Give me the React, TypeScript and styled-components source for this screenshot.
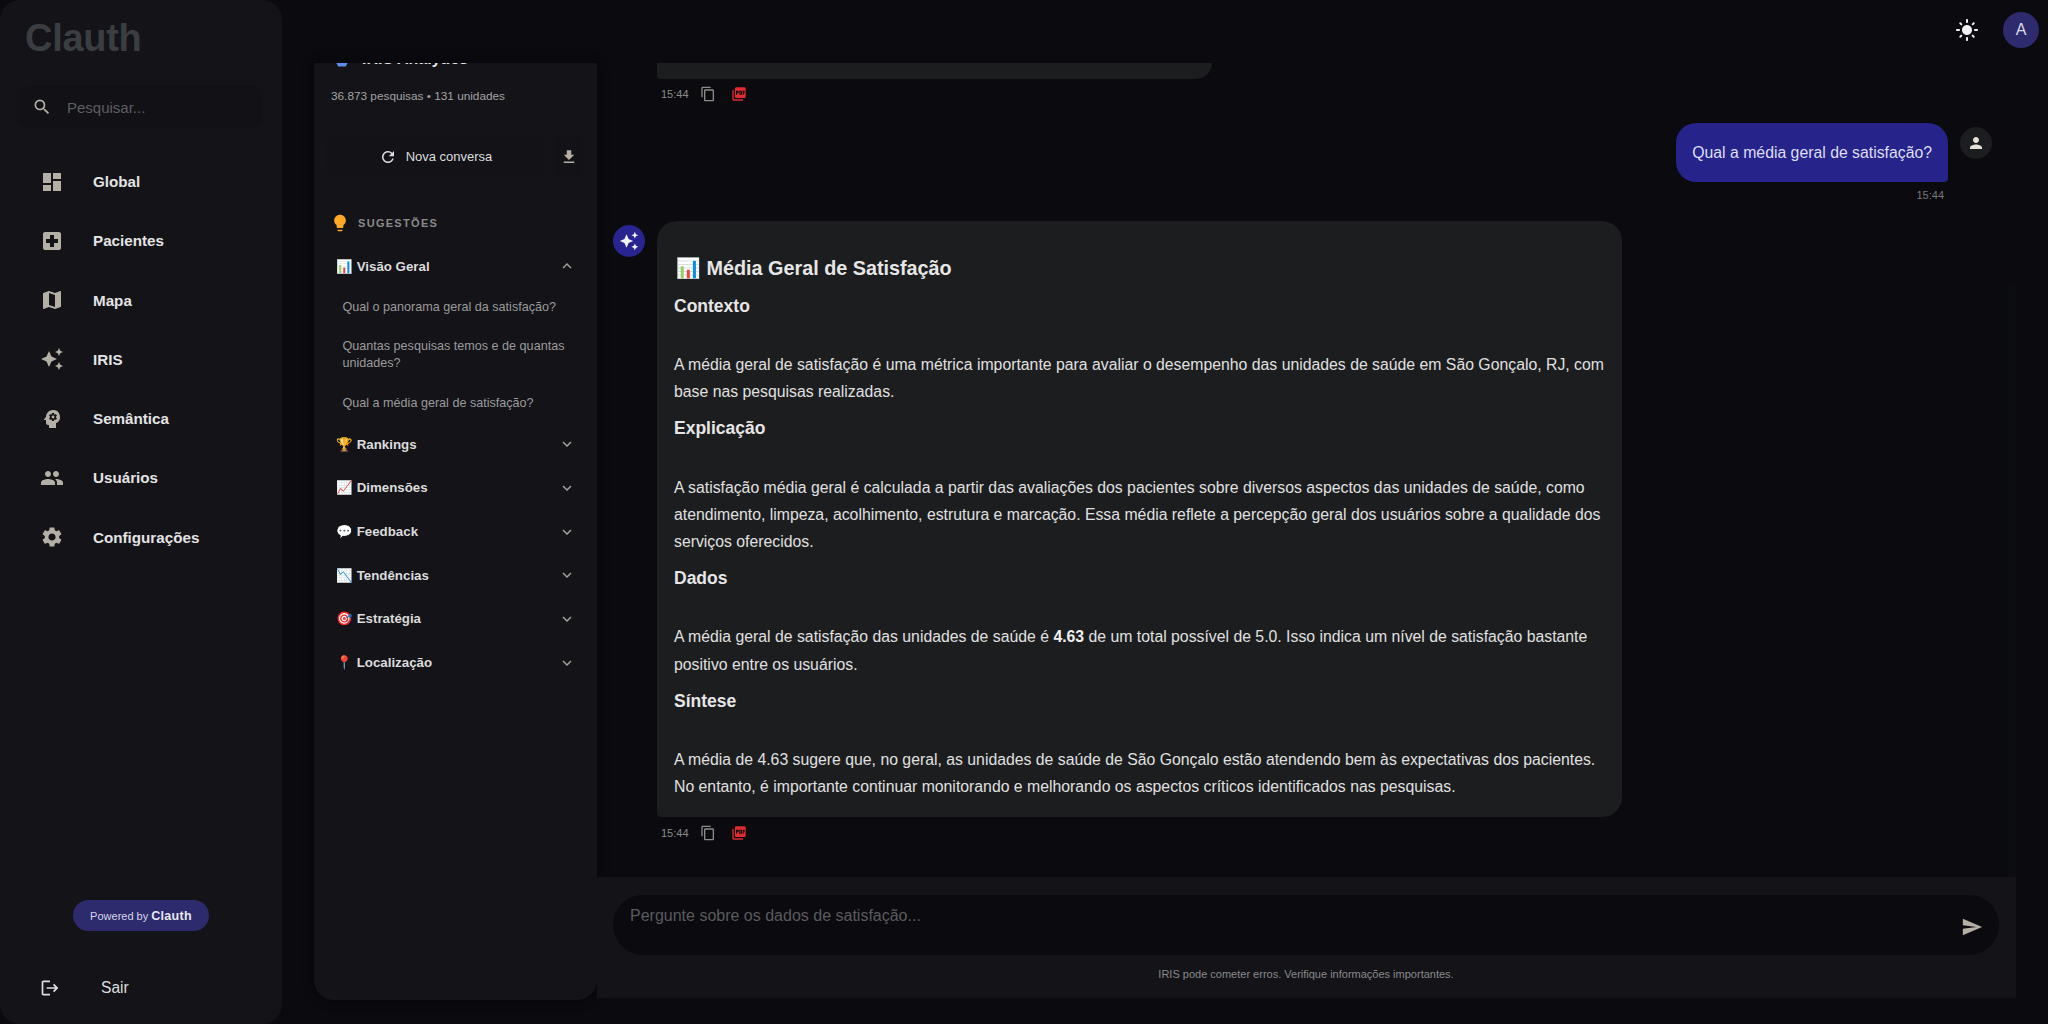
import React from "react";
import styled, { createGlobalStyle } from "styled-components";
import {
  MdDashboard, MdLocalHospital, MdMap, MdAutoAwesome, MdPsychology, MdPeople, MdSettings,
  MdLogout, MdSearch, MdRefresh, MdDownload, MdLightbulb, MdExpandMore, MdExpandLess,
  MdContentCopy, MdPictureAsPdf, MdPerson, MdSend, MdLightMode,
} from "react-icons/md";

const Global = createGlobalStyle`
  html, body { margin: 0; padding: 0; background: #0a0a0f; }
  body { font-family: "Liberation Sans", Arial, sans-serif; color: #e5e5e5; overflow: hidden; }
  * { box-sizing: border-box; }
`;

const Shell = styled.div`display: flex; width: 2048px; height: 1024px; background: #0a0a0f;`;

const Sidebar = styled.aside`
  width: 282px; height: 1024px; flex: none; background: #131318; border-radius: 20px;
  display: flex; flex-direction: column; padding: 0 20px;
`;
const Logo = styled.div`
  font-size: 38px; font-weight: 700; color: #3b3e41; height: 76px; line-height: 76px; padding-left: 5px;
  letter-spacing: -0.3px;
`;
const SearchBox = styled.div`
  height: 42px; margin-top: 10px; border-radius: 10px; background: #111116; display: flex; align-items: center;
  gap: 15px; padding-left: 12px; color: #b5b0a5; font-size: 15px;
`;
const SearchText = styled.span`color: #5e5e60;`;
const Nav = styled.nav`display: flex; flex-direction: column; margin-top: 24px;`;
const NavItem = styled.div`
  height: 59.25px; display: flex; align-items: center; font-size: 15.2px; font-weight: 700; color: #e4e4e4;
  padding-left: 20px; gap: 29px;
  svg { color: #b5b0a5; flex: none; }
`;
const SidebarFoot = styled.div`margin-top: auto; display: flex; flex-direction: column; align-items: center;`;
const Pill = styled.div`
  height: 31px; width: 136px; border-radius: 16px; background: #2d2a6e; display: flex; align-items: center;
  justify-content: center; gap: 3px; font-size: 11px; color: #d6d6e6;
`;
const PillBrand = styled.b`font-size: 12.5px; color: #e8e8f0; letter-spacing: 0.3px;`;
const Logout = styled.div`
  align-self: stretch; display: flex; align-items: center; height: 40px; margin: 37px 0 16px; padding-left: 20px;
  gap: 41px; font-size: 15.6px; color: #dedede; svg { color: #e0e0e0; flex: none; }
`;

const Main = styled.div`flex: 1; min-width: 0; display: flex; flex-direction: column; padding-bottom: 24px;`;
const TopBar = styled.header`
  height: 63px; flex: none; display: flex; justify-content: flex-end; align-items: center; padding: 0 9px 3px 0; gap: 24px;
  svg { color: #f0f0f0; }
`;
const UserCircle = styled.div`
  width: 36px; height: 36px; border-radius: 50%; background: #2d2a6e; color: #dcdce8; font-size: 16px;
  display: flex; align-items: center; justify-content: center;
`;
const Body = styled.div`flex: 1; min-height: 0; display: flex; padding: 0 32px;`;

const Panel = styled.section`
  width: 283px; flex: none; background: #131318; border-radius: 0 0 20px 20px; overflow: hidden;
  display: flex; flex-direction: column; box-shadow: 0 0 12px rgba(0,0,0,.4);
`;
const PanelInner = styled.div`margin-top: -15px; padding: 0 15px 0 12px; display: flex; flex-direction: column;`;
const PanelTitle = styled.div`
  display: flex; align-items: center; gap: 13px; height: 22px; padding-left: 9px; font-size: 16px; font-weight: 700; color: #e5e5e5;
`;
const Robot = styled.span`
  width: 14px; height: 15px; background: #5b8def; display: block; flex: none;
  clip-path: polygon(0 0, 100% 0, 100% 55%, 78% 100%, 22% 100%, 0 55%);
`;
const Stats = styled.div`font-size: 11.8px; color: #a3a3a3; padding-left: 5px; margin-top: 17px; line-height: 18px;`;
const ActionRow = styled.div`display: flex; gap: 10px; margin-top: 31px;`;
const NewChat = styled.div`
  width: 219px; height: 41px; border-radius: 10px; background: #121217; display: flex; align-items: center;
  justify-content: center; gap: 9px; font-size: 13px; color: #dedede; svg { color: #dedede; }
`;
const IconBtn = styled.div`
  width: 27px; height: 41px; border-radius: 8px; background: #121217; display: flex; align-items: center; justify-content: center;
  svg { color: #b5b0a5; }
`;
const Suggest = styled.div`
  display: flex; align-items: center; gap: 8px; margin-top: 33.6px; height: 24px; padding-left: 4px; font-size: 11px; font-weight: 700;
  letter-spacing: 1.3px; color: #8a8a88; svg { color: #ffa726; flex: none; }
`;
const Accordion = styled.div`
  height: 43.7px; display: flex; align-items: center; justify-content: space-between; padding: 0 6px 0 10px;
  font-size: 13.3px; font-weight: 700; color: #dcdcdc; svg { color: #a5a19a; flex: none; }
`;
const Sub = styled.div`font-size: 12.6px; line-height: 17px; color: #9b9b9b; padding: 0 0 0 16.5px; margin-bottom: 22.5px;`;
const SubList = styled.div`padding-top: 10.5px; margin-bottom: -12px;`;
const FirstAccordion = styled(Accordion)`margin-top: 10px;`;

const Chat = styled.main`flex: 1; min-width: 0; display: flex; flex-direction: column;`;
const Messages = styled.div`
  flex: 1; min-height: 0; overflow: hidden; display: flex; flex-direction: column; padding: 0 24px 0 16px;
  background: linear-gradient(to left, #0c0d10 8px, transparent 8px) no-repeat 0 222px;
`;
const Row = styled.div<{ $user?: boolean }>`
  display: flex; gap: 12px; flex: none; justify-content: ${(p) => (p.$user ? "flex-end" : "flex-start")};
`;
const Avatar = styled.div<{ $user?: boolean }>`
  width: 32px; height: 32px; border-radius: 50%; flex: none; display: flex; align-items: center; justify-content: center;
  background: ${(p) => (p.$user ? "#1c1d1f" : "#282590")};
  color: ${(p) => (p.$user ? "#e5e1d8" : "#f2f2f2")};
  margin-top: 4px;
`;
const ClippedBubble = styled.div`
  width: 555px; height: 16px; flex: none; margin-left: 44px; background: #1c1d1f; border-radius: 0 0 20px 4px;
`;
const Meta = styled.div`
  display: flex; align-items: center; height: 24px; flex: none; font-size: 11px; color: #8a8a88; padding-left: 48px;
  gap: 11px; svg { flex: none; }
`;
const FirstMeta = styled(Meta)`margin-top: 3px;`;
const BotMeta = styled(Meta)`margin-top: 4px;`;
const Copy = styled(MdContentCopy)`color: #8f8c86;`;
const Pdf = styled(MdPictureAsPdf)`color: #e02b30; margin-left: 4px;`;
const UserColumn = styled.div`display: flex; flex-direction: column; align-items: flex-end;`;
const UserBubble = styled.div`
  background: #26238a; color: #dedef5; border-radius: 20px 20px 4px 20px; height: 59px; padding: 0 16px;
  display: flex; align-items: center; font-size: 15.8px;
`;
const UserTime = styled.div`font-size: 11px; color: #77777a; height: 26px; line-height: 26px; padding-right: 4px;`;
const UserRow = styled(Row)`margin-top: 17px;`;
const BotRow = styled(Row)`margin-top: 13px;`;
const BotBubble = styled.article`
  width: 965px; height: 596px; flex: none; background: #1c1d1f; border-radius: 20px 20px 20px 4px; padding: 33px 14px 0 17px; color: #e0e0e0;
`;
const Title = styled.h2`margin: 0; padding-left: 2px; font-size: 19.8px; line-height: 29px; font-weight: 700; color: #e6e6e6;`;
const Heading = styled.h3`margin: 10.8px 0 33.3px; font-size: 17.5px; line-height: 24px; font-weight: 700; color: #e6e6e6;`;
const Para = styled.p`margin: 0; font-size: 15.8px; line-height: 27.2px; b { font-weight: 700; color: #f0f0f0; }`;

const InputArea = styled.div`
  height: 121px; flex: none; margin-bottom: 2px; background: #131318; padding: 18px 17px 0 16px; display: flex; flex-direction: column;
`;
const Field = styled.div`
  height: 60px; background: #0a0a0f; border-radius: 30px; display: flex; justify-content: space-between; padding: 12px 16px 0 17px;
  font-size: 16px; color: #5b5b5d; svg { color: #b5b0a5; margin-top: 9px; }
`;
const Disclaimer = styled.div`text-align: center; font-size: 11px; color: #8a8a8a; margin-top: 12px; line-height: 14px;`;

const accordions = ["🏆 Rankings", "📈 Dimensões", "💬 Feedback", "📉 Tendências", "🎯 Estratégia", "📍 Localização"];
const navItems = [
  [MdDashboard, "Global"], [MdLocalHospital, "Pacientes"], [MdMap, "Mapa"], [MdAutoAwesome, "IRIS"],
  [MdPsychology, "Semântica"], [MdPeople, "Usuários"], [MdSettings, "Configurações"],
] as const;

export default function App() {
  return (
    <Shell>
      <Global />
      <Sidebar>
        <Logo>Clauth</Logo>
        <SearchBox><MdSearch size={20} /><SearchText>Pesquisar...</SearchText></SearchBox>
        <Nav>
          {navItems.map(([Icon, label]) => (
            <NavItem key={label}><Icon size={24} />{label}</NavItem>
          ))}
        </Nav>
        <SidebarFoot>
          <Pill>Powered by <PillBrand>Clauth</PillBrand></Pill>
          <Logout><MdLogout size={20} />Sair</Logout>
        </SidebarFoot>
      </Sidebar>
      <Main>
        <TopBar>
          <MdLightMode size={24} />
          <UserCircle>A</UserCircle>
        </TopBar>
        <Body>
          <Panel>
            <PanelInner>
              <PanelTitle><Robot />IRIS Analytics</PanelTitle>
              <Stats>36.873 pesquisas • 131 unidades</Stats>
              <ActionRow>
                <NewChat><MdRefresh size={18} />Nova conversa</NewChat>
                <IconBtn><MdDownload size={18} /></IconBtn>
              </ActionRow>
              <Suggest><MdLightbulb size={20} />SUGESTÕES</Suggest>
              <FirstAccordion><span>📊 Visão Geral</span><MdExpandLess size={18} /></FirstAccordion>
              <SubList>
                <Sub>Qual o panorama geral da satisfação?</Sub>
                <Sub>Quantas pesquisas temos e de quantas unidades?</Sub>
                <Sub>Qual a média geral de satisfação?</Sub>
              </SubList>
              {accordions.map((a) => (
                <Accordion key={a}><span>{a}</span><MdExpandMore size={18} /></Accordion>
              ))}
            </PanelInner>
          </Panel>
          <Chat>
            <Messages>
              <ClippedBubble />
              <FirstMeta>15:44<Copy size={16} /><Pdf size={16} /></FirstMeta>
              <UserRow $user>
                <UserColumn>
                  <UserBubble>Qual a média geral de satisfação?</UserBubble>
                  <UserTime>15:44</UserTime>
                </UserColumn>
                <Avatar $user><MdPerson size={18} /></Avatar>
              </UserRow>
              <BotRow>
                <Avatar><MdAutoAwesome size={20} /></Avatar>
                <BotBubble>
                  <Title>📊 Média Geral de Satisfação</Title>
                  <Heading>Contexto</Heading>
                  <Para>A média geral de satisfação é uma métrica importante para avaliar o desempenho das unidades de saúde em São Gonçalo, RJ, com base nas pesquisas realizadas.</Para>
                  <Heading>Explicação</Heading>
                  <Para>A satisfação média geral é calculada a partir das avaliações dos pacientes sobre diversos aspectos das unidades de saúde, como atendimento, limpeza, acolhimento, estrutura e marcação. Essa média reflete a percepção geral dos usuários sobre a qualidade dos serviços oferecidos.</Para>
                  <Heading>Dados</Heading>
                  <Para>A média geral de satisfação das unidades de saúde é <b>4.63</b> de um total possível de 5.0. Isso indica um nível de satisfação bastante positivo entre os usuários.</Para>
                  <Heading>Síntese</Heading>
                  <Para>A média de 4.63 sugere que, no geral, as unidades de saúde de São Gonçalo estão atendendo bem às expectativas dos pacientes. No entanto, é importante continuar monitorando e melhorando os aspectos críticos identificados nas pesquisas.</Para>
                </BotBubble>
              </BotRow>
              <BotMeta>15:44<Copy size={16} /><Pdf size={16} /></BotMeta>
            </Messages>
            <InputArea>
              <Field>Pergunte sobre os dados de satisfação...<MdSend size={22} /></Field>
              <Disclaimer>IRIS pode cometer erros. Verifique informações importantes.</Disclaimer>
            </InputArea>
          </Chat>
        </Body>
      </Main>
    </Shell>
  );
}
